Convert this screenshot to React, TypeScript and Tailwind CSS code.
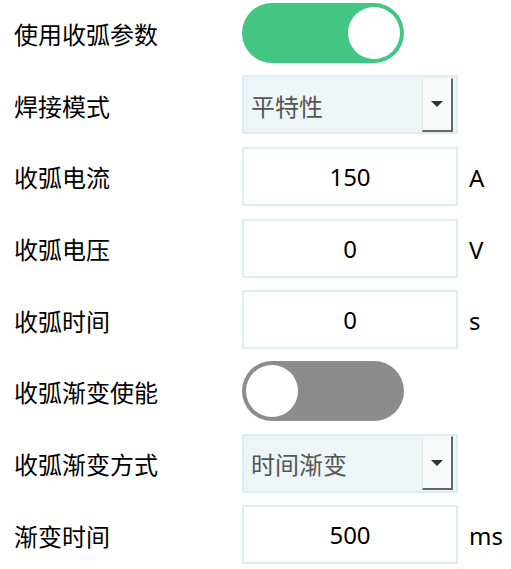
import React from 'react'

type Row =
  | { kind: 'toggle'; label: string; on: boolean }
  | { kind: 'select'; label: string; value: string }
  | { kind: 'input'; label: string; value: string; unit: string }

const ROWS: Row[] = [
  { kind: 'toggle', label: '使用收弧参数', on: true },
  { kind: 'select', label: '焊接模式', value: '平特性' },
  { kind: 'input', label: '收弧电流', value: '150', unit: 'A' },
  { kind: 'input', label: '收弧电压', value: '0', unit: 'V' },
  { kind: 'input', label: '收弧时间', value: '0', unit: 's' },
  { kind: 'toggle', label: '收弧渐变使能', on: false },
  { kind: 'select', label: '收弧渐变方式', value: '时间渐变' },
  { kind: 'input', label: '渐变时间', value: '500', unit: 'ms' },
]

function Toggle({ on }: { on: boolean }) {
  return (
    <div
      className={
        'flex h-[60px] w-[162px] items-center rounded-full px-[4px] ' +
        (on ? 'justify-end bg-[#43c584]' : 'justify-start bg-[#8c8c8c]')
      }
    >
      <div className="h-[52px] w-[52px] rounded-full bg-white" />
    </div>
  )
}

function Select({ value }: { value: string }) {
  return (
    <div className="flex h-[59px] w-[216px] items-center justify-between border-2 border-[#dcedf4] bg-[#eef5f7] pl-[7px] pr-[3px]">
      <span className="pt-[4px] text-[24px] text-[#555]">{value}</span>
      <div className="flex h-[54px] w-[31px] items-center justify-center border-t border-l border-t-[#f4f4f4] border-l-[#e4e4e4] border-r-2 border-b-2 border-r-[#666] border-b-[#666] bg-[#f7f9f9]">
        <div className="h-0 w-0 border-x-[6px] border-t-[6px] border-x-transparent border-t-[#333]" />
      </div>
    </div>
  )
}

function NumberBox({ value, unit }: { value: string; unit: string }) {
  return (
    <div className="flex items-center">
      <div className="flex h-[59px] w-[216px] items-center justify-center border-2 border-[#dcedf4] bg-white pt-[1px] text-[24px] text-black">
        {value}
      </div>
      <span className="ml-[11px] pt-[3px] text-[24px] text-black">{unit}</span>
    </div>
  )
}

export default function App() {
  return (
    <div
      className="flex w-[511px] flex-col gap-[11.7px] bg-white pt-[3px]"
      style={{ fontFamily: '"Noto Sans", "Noto Sans CJK SC", sans-serif' }}
    >
      {ROWS.map((row) => (
        <div key={row.label} className="flex h-[60px] items-center">
          <div className="w-[242px] pl-[14px] pt-[4px] text-[24px] text-black">{row.label}</div>
          {row.kind === 'toggle' && <Toggle on={row.on} />}
          {row.kind === 'select' && <Select value={row.value} />}
          {row.kind === 'input' && <NumberBox value={row.value} unit={row.unit} />}
        </div>
      ))}
    </div>
  )
}
